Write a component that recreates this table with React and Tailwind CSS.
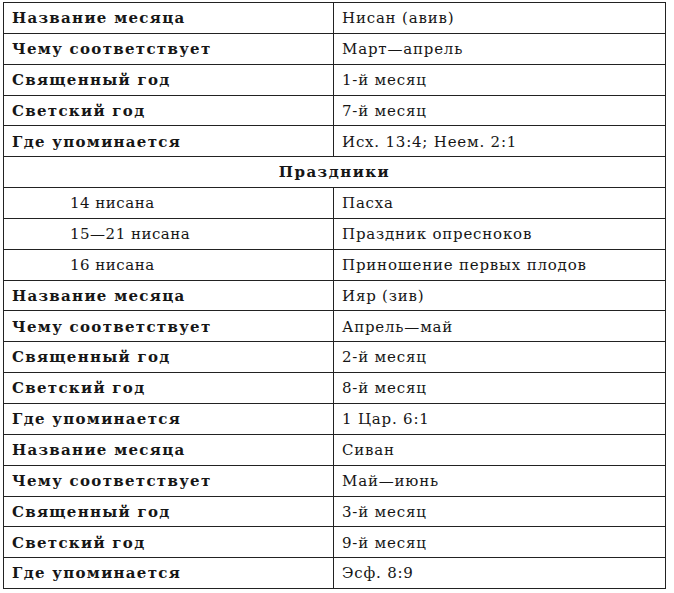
const rows = [
  { type: 'row', label: 'Название месяца', value: 'Нисан (авив)' },
  { type: 'row', label: 'Чему соответствует', value: 'Март—апрель' },
  { type: 'row', label: 'Священный год', value: '1-й месяц' },
  { type: 'row', label: 'Светский год', value: '7-й месяц' },
  { type: 'row', label: 'Где упоминается', value: 'Исх. 13:4; Неем. 2:1' },
  { type: 'head', label: 'Праздники' },
  { type: 'feast', label: '14 нисана', value: 'Пасха' },
  { type: 'feast', label: '15—21 нисана', value: 'Праздник опресноков' },
  { type: 'feast', label: '16 нисана', value: 'Приношение первых плодов' },
  { type: 'row', label: 'Название месяца', value: 'Ияр (зив)' },
  { type: 'row', label: 'Чему соответствует', value: 'Апрель—май' },
  { type: 'row', label: 'Священный год', value: '2-й месяц' },
  { type: 'row', label: 'Светский год', value: '8-й месяц' },
  { type: 'row', label: 'Где упоминается', value: '1 Цар. 6:1' },
  { type: 'row', label: 'Название месяца', value: 'Сиван' },
  { type: 'row', label: 'Чему соответствует', value: 'Май—июнь' },
  { type: 'row', label: 'Священный год', value: '3-й месяц' },
  { type: 'row', label: 'Светский год', value: '9-й месяц' },
  { type: 'row', label: 'Где упоминается', value: 'Эсф. 8:9' },
];

export default function App() {
  return (
    <div className="bg-white w-[674px] h-[593px] pt-[2px] pl-[3px] text-[#161616] font-['DejaVu_Serif',serif]">
      <table className="border-collapse w-[662px] table-fixed">
        <colgroup>
          <col className="w-[330px]" />
          <col className="w-[332px]" />
        </colgroup>
        <tbody>
          {rows.map((r, i) =>
            r.type === 'head' ? (
              <tr key={i} className="h-[30.85px]">
                <td colSpan={2} className="border border-[#222] text-center font-bold text-[15px] tracking-[1.5px] p-0 pt-[1px]">
                  {r.label}
                </td>
              </tr>
            ) : (
              <tr key={i} className="h-[30.85px]">
                <td
                  className={`border border-[#222] p-0 pt-[1px] text-[15px] ${
                    r.type === 'feast' ? 'pl-[66px] tracking-[0.5px]' : 'pl-[8px] font-bold tracking-[1.3px]'
                  }`}
                >
                  {r.label}
                </td>
                <td className="border border-[#222] p-0 pt-[1px] pl-[8px] text-[15px] tracking-[0.8px]">
                  {r.value}
                </td>
              </tr>
            )
          )}
        </tbody>
      </table>
    </div>
  );
}
